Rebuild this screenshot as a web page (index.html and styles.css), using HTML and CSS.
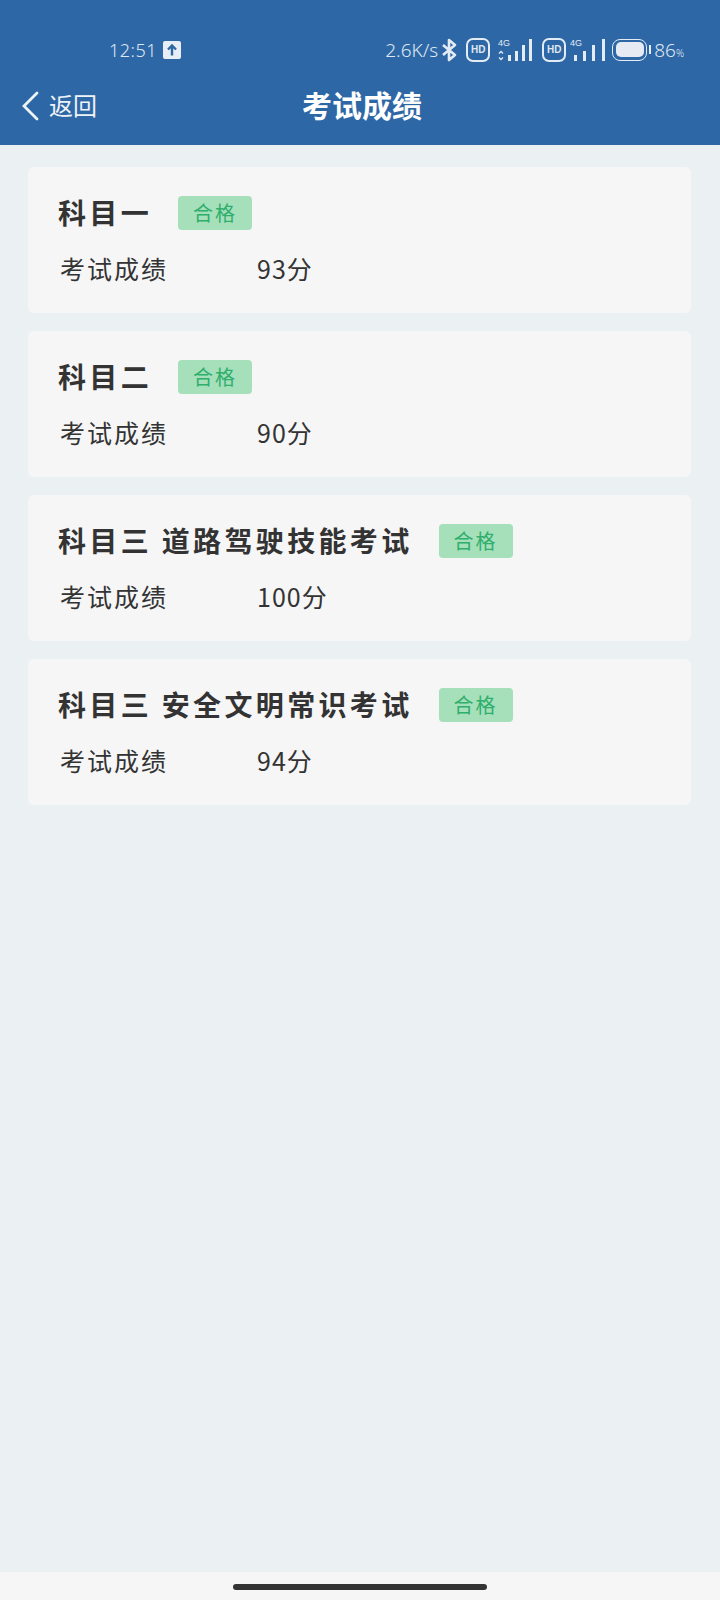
FILE: index.html
```html
<!DOCTYPE html>
<html lang="zh-CN">
<head>
  <meta charset="UTF-8">
  <title>考试成绩</title>
  <link rel="stylesheet" href="styles.css">
</head>
<body>

<div class="page">
  <header class="topbar">
    <div class="status">
      <div class="status-left">
        <span class="clock">12:51</span>
        <svg class="upload" width="18" height="18" viewBox="0 0 18 18">
          <rect width="18" height="18" rx="2" fill="#e8eef5"/>
          <path d="M9 14.5V5M5 8.5 9 4.5l4 4" fill="none" stroke="#2e67a6" stroke-width="2.4"/>
        </svg>
      </div>
      <div class="status-right">
        <span class="speed">2.6K/s</span>
        <svg class="bt" width="17" height="24" viewBox="0 0 17 24">
          <path d="M2 7l12 10-6 5V2l6 5L2 17" fill="none" stroke="#e3ebf4" stroke-width="2.6" stroke-linejoin="round"/>
        </svg>
        <span class="hd">HD</span>
        <svg class="signal first" width="36" height="24" viewBox="0 0 36 24">
          <text x="1" y="8" class="net">4G</text>
          <path d="M2 15.5l2-2 2 2M2 19.5l2 2 2-2" fill="none" stroke="#e3ebf4" stroke-width="1.3"/>
          <g fill="#e3ebf4">
            <rect x="11" y="17" width="3" height="6"/>
            <rect x="18" y="13" width="3" height="10"/>
            <rect x="25" y="7" width="3" height="16"/>
            <rect x="32" y="1" width="3" height="22"/>
          </g>
        </svg>
        <span class="hd">HD</span>
        <svg class="signal last" width="36" height="24" viewBox="0 0 36 24">
          <text x="0" y="8" class="net">4G</text>
          <g fill="#e3ebf4">
            <rect x="4" y="17" width="3" height="6"/>
            <rect x="13" y="13" width="3" height="10"/>
            <rect x="22" y="7" width="3" height="16"/>
            <rect x="32" y="1" width="3" height="22"/>
          </g>
        </svg>
        <div class="battery"><span class="battery-fill"></span></div>
        <span class="battery-nub"></span>
        <span class="percent">86<small>%</small></span>
      </div>
    </div>
    <nav class="nav">
      <a class="back">
        <svg width="18" height="30" viewBox="0 0 18 30">
          <path d="M16 2 3 15l13 13" fill="none" stroke="#eef3f8" stroke-width="2.8" stroke-linecap="round"/>
        </svg>
        <span class="back-text">返回</span>
      </a>
      <h1>考试成绩</h1>
    </nav>
  </header>

  <main class="list">
    <section class="card">
      <div class="card-title"><h2>科目一</h2><span class="tag">合格</span></div>
      <div class="row"><span class="row-label">考试成绩</span><span>93分</span></div>
    </section>
    <section class="card">
      <div class="card-title"><h2>科目二</h2><span class="tag">合格</span></div>
      <div class="row"><span class="row-label">考试成绩</span><span>90分</span></div>
    </section>
    <section class="card">
      <div class="card-title"><h2>科目三 道路驾驶技能考试</h2><span class="tag">合格</span></div>
      <div class="row"><span class="row-label">考试成绩</span><span>100分</span></div>
    </section>
    <section class="card">
      <div class="card-title"><h2>科目三 安全文明常识考试</h2><span class="tag">合格</span></div>
      <div class="row"><span class="row-label">考试成绩</span><span>94分</span></div>
    </section>
  </main>

  <footer class="homebar"><span class="home-pill"></span></footer>
</div>

</body>
</html>
```

FILE: styles.css
```css
* {
  box-sizing: border-box;
}

body {
  margin: 0;
  background: #ebf0f3;
  font-family: "Noto Sans CJK SC", "Noto Sans", sans-serif;
  color: #333;
}

.page {
  display: flex;
  flex-direction: column;
  height: 1600px;
}

.topbar {
  height: 145px;
  background: #2e67a6;
  color: #eef3f8;
}

.status {
  display: flex;
  justify-content: space-between;
  align-items: center;
  height: 74px;
  padding: 25px 36px 0 109px;
}

.status-left {
  display: flex;
  align-items: center;
  gap: 6px;
}

.clock {
  font-size: 18px;
  font-weight: 300;
  letter-spacing: 0.5px;
  font-family: "Noto Sans", sans-serif;
  color: #dfe8f2;
}

.upload {
  display: block;
}

.status-right {
  display: flex;
  align-items: center;
  color: #dfe8f2;
}

.speed {
  font-family: "Noto Sans", sans-serif;
  font-size: 19px;
  font-weight: 300;
  margin-right: 3px;
}

.hd {
  width: 24px;
  height: 24px;
  margin: 0 7px;
  border: 2.5px solid #e3ebf4;
  border-radius: 7px;
  font: bold 10px/19px "Liberation Sans", sans-serif;
  text-align: center;
}

.bt {
  display: block;
  margin-right: 1px;
}

.signal {
  display: block;
}

.signal.first {
  margin-right: 2px;
}

.signal.last {
  margin-left: -3px;
}

.net {
  font: 9px "Liberation Sans", sans-serif;
  fill: #e3ebf4;
}

.battery {
  width: 35px;
  height: 22px;
  margin-left: 6px;
  padding: 2.5px;
  border: 1.5px solid #e3ebf4;
  border-radius: 8px;
}

.battery-fill {
  display: block;
  height: 100%;
  border-radius: 5px;
  background: #e6ebf3;
}

.battery-nub {
  width: 2px;
  height: 9px;
  margin: 0 3px 0 2px;
  background: #e3ebf4;
}

.percent {
  font-family: "Noto Sans", sans-serif;
  font-size: 19px;
  font-weight: 300;
}

.percent small {
  font-size: 10px;
}

.nav {
  position: relative;
  display: flex;
  justify-content: center;
  align-items: center;
  height: 71px;
  padding: 0 0 12px 4px;
}

.back {
  position: absolute;
  left: 21px;
  top: 16px;
  display: flex;
  align-items: center;
  gap: 10px;
  font-size: 24px;
  line-height: 34px;
}

.back svg {
  display: block;
}

.back-text {
  margin-top: -2px;
}

.nav h1 {
  margin: 0;
  font-size: 30px;
  font-weight: 700;
  color: #fff;
}

.list {
  flex: 1;
  display: flex;
  flex-direction: column;
  gap: 18px;
  padding: 22px 29px 0 28px;
}

.card {
  height: 146px;
  padding: 29px 30px 0;
  background: #f6f6f6;
  border-radius: 6px;
}

.card-title {
  display: flex;
  align-items: flex-start;
  gap: 26px;
  height: 34px;
}

.card-title h2 {
  margin: -1px 0 0;
  font-size: 28px;
  font-weight: 700;
  letter-spacing: 3.35px;
  line-height: 34px;
  color: #333;
}

.tag {
  width: 74px;
  height: 34px;
  background: #a5e0bb;
  border-radius: 4px;
  font-size: 20px;
  line-height: 34px;
  letter-spacing: 2px;
  text-align: center;
  color: #2fae6c;
}

.row {
  display: flex;
  margin-top: 21px;
  font-size: 25px;
  line-height: 34px;
  letter-spacing: 1px;
  color: #333;
}

.row-label {
  width: 199px;
  padding-left: 2px;
  letter-spacing: 2px;
}

.homebar {
  display: flex;
  justify-content: center;
  height: 28px;
  padding-top: 12px;
  background: #f6f6f6;
}

.home-pill {
  width: 254px;
  height: 6px;
  border-radius: 3px;
  background: #333;
}
```
